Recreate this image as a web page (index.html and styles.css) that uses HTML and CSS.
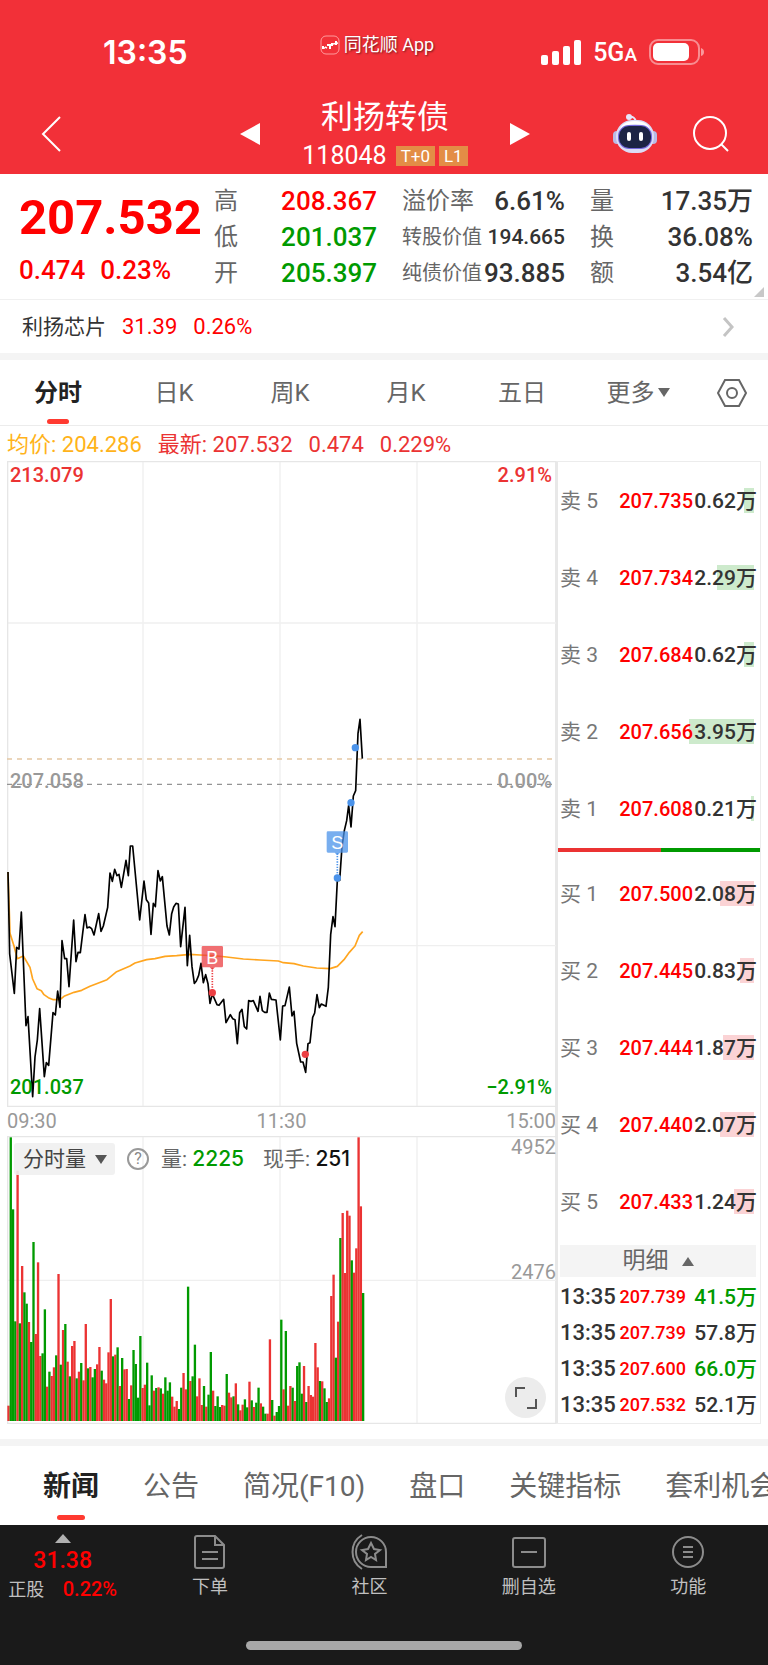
FILE: index.html
```
<!DOCTYPE html>
<html lang="zh-CN">
  <head>
    <meta charset="UTF-8">
    <meta name="viewport" content="width=device-width, initial-scale=1.0">
    <title>利扬转债 118048</title>
    <link rel="stylesheet" href="styles.css">
  </head>
  <body>
    <header class="header">
      <div class="status-bar">
        <span class="clock">13:35</span>
        <span class="watermark">
          <svg width="20" height="20" viewBox="0 0 20 20" fill="none" stroke="#fff">
            <rect x="1" y="1" width="18" height="18" rx="5" stroke="#ff9a9c"/>
            <path d="M2 13h3M5 12l2 1M13 9l5-1" stroke-width="1.500"/>
            <path d="M3 11v3M8 9v2M10 9v5M12 8v3M16 6v4" stroke-width="2"/>
          </svg>
          同花顺 App
        </span>
        <span class="signals">
          <svg width="40" height="25" viewBox="0 0 40 25" fill="#fff">
            <rect x="0" y="15" width="7" height="10" rx="2"/>
            <rect x="11" y="11" width="7" height="14" rx="2"/>
            <rect x="22" y="6" width="7" height="19" rx="2"/>
            <rect x="33" y="0" width="7" height="25" rx="2"/>
          </svg>
          <span class="network">5G<small>A</small></span>
          <svg width="56" height="26" viewBox="0 0 56 26">
            <rect x="1" y="1" width="49" height="24" rx="8" fill="none" stroke="#fff" stroke-opacity=".45" stroke-width="2"/>
            <rect x="4" y="4" width="36" height="18" rx="5" fill="#fff"/>
            <path d="M52 9q3 1 3 4t-3 4z" fill="#fff" fill-opacity=".5"/>
          </svg>
        </span>
      </div>
      <div class="title-bar">
        <button type="button" class="icon-button back" aria-label="返回">
          <svg width="20" height="36" viewBox="0 0 20 36" fill="none" stroke="#fff" stroke-width="2"><path d="M19 1L2 18l17 17"/></svg>
        </button>
        <div class="title-center">
          <button type="button" class="icon-button" aria-label="上一个">
            <svg width="20" height="22" viewBox="0 0 20 22" fill="#fff"><path d="M20 0v22L0 11z"/></svg>
          </button>
          <div class="title">
            <h1>利扬转债</h1>
            <p>118048 <span class="badge">T+0</span><span class="badge">L1</span></p>
          </div>
          <button type="button" class="icon-button" aria-label="下一个">
            <svg width="20" height="22" viewBox="0 0 20 22" fill="#fff"><path d="M0 0v22l20-11z"/></svg>
          </button>
        </div>
        <div class="title-actions">
          <button type="button" class="icon-button" aria-label="智能助手">
            <svg width="44" height="40" viewBox="0 0 44 40">
              <path d="M16 3q6-1 7 5" fill="none" stroke="#e6e6fb" stroke-width="2"/>
              <circle cx="16" cy="3" r="3" fill="#e6e6fb"/>
              <rect x="0" y="17" width="8" height="13" rx="4" fill="#b9bbe6"/>
              <rect x="36" y="17" width="8" height="13" rx="4" fill="#b9bbe6"/>
              <rect x="3" y="6" width="38" height="33" rx="16" fill="#dcdcf6"/>
              <path d="M6 18Q8 7 22 7t16 11Q32 10 22 10T6 18z" fill="#fff"/>
              <rect x="5" y="11" width="34" height="24" rx="11" fill="#7468dc"/>
              <rect x="6" y="12" width="32" height="22" rx="10" fill="#1d2445"/>
              <rect x="14" y="18" width="4" height="9" rx="2" fill="#fff"/>
              <rect x="26" y="18" width="4" height="9" rx="2" fill="#fff"/>
            </svg>
          </button>
          <button type="button" class="icon-button" aria-label="搜索">
            <svg width="36" height="36" viewBox="0 0 36 36" fill="none" stroke="#fff" stroke-width="2"><circle cx="17" cy="17" r="16"/><path d="M28 28l7 7"/></svg>
          </button>
        </div>
      </div>
    </header>

    <section class="quote">
      <div class="quote-price">
        <strong>207.532</strong>
        <p><span>0.474</span><span>0.23%</span></p>
      </div>
      <dl>
        <div><dt>高</dt><dd class="up">208.367</dd></div>
        <div><dt>低</dt><dd class="down">201.037</dd></div>
        <div><dt>开</dt><dd class="down">205.397</dd></div>
      </dl>
      <dl>
        <div><dt>溢价率</dt><dd>6.61%</dd></div>
        <div><dt class="small">转股价值</dt><dd class="small">194.665</dd></div>
        <div><dt class="small">纯债价值</dt><dd>93.885</dd></div>
      </dl>
      <dl>
        <div><dt>量</dt><dd>17.35万</dd></div>
        <div><dt>换</dt><dd>36.08%</dd></div>
        <div><dt>额</dt><dd>3.54亿</dd></div>
      </dl>
      <i class="quote-corner"></i>
    </section>

    <a class="related" href="#stock">
      <span>利扬芯片</span>
      <span class="up">31.39</span>
      <span class="up">0.26%</span>
      <svg width="12" height="20" viewBox="0 0 12 20" fill="none" stroke="#c4c4c4" stroke-width="3"><path d="M2 1l8 9-8 9"/></svg>
    </a>

    <nav class="period-tabs">
      <button type="button" class="active">分时</button>
      <button type="button">日K</button>
      <button type="button">周K</button>
      <button type="button">月K</button>
      <button type="button">五日</button>
      <button type="button">更多<svg width="12" height="9" viewBox="0 0 12 9" fill="#666"><path d="M0 0h12L6 9z"/></svg></button>
      <button type="button" aria-label="设置">
        <svg width="30" height="28" viewBox="0 0 30 28" fill="none" stroke="#666" stroke-width="2"><path d="M8 1h14l7 13-7 13H8L1 14z"/><circle cx="15" cy="14" r="5"/></svg>
      </button>
    </nav>

    <p class="legend">
      <span class="avg">均价: 204.286</span>
      <span>最新: 207.532</span>
      <span>0.474</span>
      <span>0.229%</span>
    </p>

    <main class="market">
      <div class="charts">
        <div class="price-chart">
          <svg viewBox="21 -717 1647 1938">
            <g class="grid">
              <path d="M429-717v1938M840-717v1938M1251-717v1938"/>
              <path d="M21-231h1647M21 737h1647"/>
            </g>
            <path class="frame" d="M23-715h1645M23-717v1938M21 1219h1647"/>
            <path class="latest-line" d="M21 177h1647"/>
            <path class="base-line" d="M21 253h1647"/>
            <polyline class="avg-line" points="24,516 30,700 42,738 52,776 70,768 90,802 98,837 111,866 124,872 132,884 145,893 160,899 180,899 192,889 222,877 245,871 270,859 321,839 350,815 390,798 405,789 440,779 465,776 495,769 530,767 570,763 600,765 640,767 680,771 730,777 780,780 835,783 850,788 882,791 910,798 950,804 990,806 1012,799 1032,779 1048,757 1065,738 1078,706 1088,695"/>
            <polyline class="price-line" points="24,516 29,762 43,880 50,742 57,747 64,636 78,977 84,950 98,1190 105,1071 112,1020 119,926 133,1130 139,1088 146,1096 159,938 166,945 173,873 180,922 186,722 194,776 200,776 207,860 221,660 228,785 234,757 241,758 248,700 255,644 261,684 268,681 275,686 282,705 296,641 303,694 310,678 323,622 330,519 337,544 344,508 351,527 357,523 364,562 378,481 385,527 391,438 398,438 419,660 432,543 439,599 446,609 453,703 460,610 466,620 474,512 481,543 487,530 501,678 508,705 515,641 521,621 528,610 535,612 542,740 555,622 562,797 569,706 576,800 583,850 589,843 596,826 603,790 610,848 617,824 624,851 630,910 637,882 651,914 657,916 671,898 678,968 691,944 698,956 705,959 712,1031 719,938 726,928 733,980 740,987 746,902 753,904 760,902 774,934 780,889 787,932 794,937 801,937 808,879 814,898 828,900 841,1020 848,918 855,917 868,861 876,948 882,934 890,1030 902,1086 909,1086 917,1117 924,1031 930,1028 938,952 944,939 951,884 958,923 964,912 978,919 985,862 992,704 999,650 1005,680 1012,541 1019,541 1026,440 1033,392 1040,362 1046,316 1053,381 1060,288 1067,272 1074,100 1080,58 1087,176"/>
            <g class="mark buy">
              <path class="stem" d="M637 803v70"/>
              <circle cx="637" cy="878" r="11"/>
              <circle cx="916" cy="1063" r="11"/>
              <path class="flag" d="M609 738h56q4 0 4 4v56q0 4-4 4h-20l-8 8-8-8h-20q-4 0-4-4v-56q0-4 4-4z"/>
              <text x="637" y="791">B</text>
            </g>
            <g class="mark sell">
              <path class="stem" d="M1012 460v70"/>
              <circle cx="1012" cy="534" r="11"/>
              <circle cx="1053" cy="308" r="11"/>
              <circle cx="1066" cy="143" r="11"/>
              <path class="flag" d="M984 394h56q4 0 4 4v56q0 4-4 4h-20l-8 8-8-8h-20q-4 0-4-4v-56q0-4 4-4z"/>
              <text x="1012" y="447">S</text>
            </g>
          </svg>
          <p class="scale top"><span>213.079</span><span>2.91%</span></p>
          <p class="scale middle"><span>207.058</span><span>0.00%</span></p>
          <p class="scale bottom"><span>201.037</span><span>−2.91%</span></p>
        </div>

        <p class="time-axis"><span>09:30</span><span>11:30</span><span>15:00</span></p>

        <div class="volume-chart">
          <svg viewBox="21 48 1647 864">
            <path class="grid" d="M429 48v864M840 48v864M1251 48v864M21 481h1647"/>
            <path class="frame" d="M21 50h1647M23 48v864M21 910h1647"/>
            <g id="volume-bars"></g>
          </svg>
          <div class="volume-info">
            <span class="indicator">
              <select aria-label="指标"><option>分时量</option></select>
              <svg width="12" height="9" viewBox="0 0 12 9" fill="#555"><path d="M0 0h12L6 9z"/></svg>
            </span>
            <button type="button" class="help" aria-label="说明">?</button>
            <span>量: <b class="down">2225</b></span>
            <span>现手: <b>251</b></span>
          </div>
          <span class="volume-max">4952</span>
          <span class="volume-half">2476</span>
          <button type="button" class="expand" aria-label="全屏">
            <svg width="22" height="22" viewBox="0 0 22 22" fill="none" stroke="#555" stroke-width="2"><path d="M1 10V1h9M21 12v9h-9"/></svg>
          </button>
        </div>
      </div>

      <aside class="book">
        <table class="depth asks">
          <tr><th>卖 5</th><td class="up">207.735</td><td class="qty"><i style="width: 10px"></i><span>0.62万</span></td></tr>
          <tr><th>卖 4</th><td class="up">207.734</td><td class="qty"><i style="width: 37px"></i><span>2.29万</span></td></tr>
          <tr><th>卖 3</th><td class="up">207.684</td><td class="qty"><i style="width: 10px"></i><span>0.62万</span></td></tr>
          <tr><th>卖 2</th><td class="up">207.656</td><td class="qty"><i style="width: 65px"></i><span>3.95万</span></td></tr>
          <tr><th>卖 1</th><td class="up">207.608</td><td class="qty"><i style="width: 3px"></i><span>0.21万</span></td></tr>
        </table>
        <div class="ratio"><i style="width: 51%"></i></div>
        <table class="depth bids">
          <tr><th>买 1</th><td class="up">207.500</td><td class="qty"><i style="width: 34px"></i><span>2.08万</span></td></tr>
          <tr><th>买 2</th><td class="up">207.445</td><td class="qty"><i style="width: 14px"></i><span>0.83万</span></td></tr>
          <tr><th>买 3</th><td class="up">207.444</td><td class="qty"><i style="width: 31px"></i><span>1.87万</span></td></tr>
          <tr><th>买 4</th><td class="up">207.440</td><td class="qty"><i style="width: 34px"></i><span>2.07万</span></td></tr>
          <tr><th>买 5</th><td class="up">207.433</td><td class="qty"><i style="width: 20px"></i><span>1.24万</span></td></tr>
        </table>
        <button type="button" class="detail-toggle">明细<svg width="12" height="9" viewBox="0 0 12 9" fill="#666"><path d="M0 9h12L6 0z"/></svg></button>
        <table class="ticks">
          <tr><td>13:35</td><td class="up">207.739</td><td class="down">41.5万</td></tr>
          <tr><td>13:35</td><td class="up">207.739</td><td>57.8万</td></tr>
          <tr><td>13:35</td><td class="up">207.600</td><td class="down">66.0万</td></tr>
          <tr><td>13:35</td><td class="up">207.532</td><td>52.1万</td></tr>
        </table>
      </aside>
    </main>

    <nav class="info-tabs">
      <a href="#news" class="active">新闻</a>
      <a href="#notice">公告</a>
      <a href="#f10">简况(F10)</a>
      <a href="#pankou">盘口</a>
      <a href="#metrics">关键指标</a>
      <a href="#arbitrage">套利机会</a>
    </nav>

    <footer class="footer">
      <nav class="actions">
        <a class="stock" href="#stock">
          <svg width="16" height="9" viewBox="0 0 16 9" fill="#b0b0b0"><path d="M0 9h16L8 0z"/></svg>
          <b>31.38</b>
          <span>正股 <b>0.22%</b></span>
        </a>
        <a href="#order">
          <svg width="36" height="36" viewBox="0 0 36 36"><path d="M5 2h18l9 9v21q0 2-2 2H5q-2 0-2-2V4q0-2 2-2zM23 2v9h9M10 18h16M10 25h16"/></svg>
          下单
        </a>
        <a href="#community">
          <svg width="36" height="36" viewBox="0 0 36 36"><path d="M35 18v15H20A15 15 0 1 1 35 18zM11 1a20 20 0 0 0 0 34"/><path d="M20 9l3 6 6 1-5 4 1 6-5-3-5 3 1-6-5-4 6-1z"/></svg>
          社区
        </a>
        <a href="#remove">
          <svg width="36" height="36" viewBox="0 0 36 36"><rect x="2" y="4" width="32" height="29" rx="2"/><path d="M10 18h16"/></svg>
          删自选
        </a>
        <a href="#functions">
          <svg width="36" height="36" viewBox="0 0 36 36"><circle cx="18" cy="18" r="15"/><path d="M13 13h10M13 18h10M13 23h10"/></svg>
          功能
        </a>
      </nav>
      <div class="home-indicator"></div>
    </footer>

    <script>
      // one entry per minute: r = up, g = down, number = top of the bar in viewBox units
      const volumes = `r857 g52 g268 g604 r152 g610 r438 g517 g551 r606 g666 g366 r642 r427 r708 g700
        g568 r800 g755 r768 r742 g706 r462 g734 r630 g612 r725 g769 r678 r663 g775 r755
        g729 r781 r612 g745 r741 g772 g747 r733 r681 g752 r779 r790 r697 r537 g709 r704
        g682 r798 g714 r748 r747 g837 r796 g690 g732 g833 g648 r804 r794 g728 g856 g766
        r812 g804 r802 g805 r821 g772 g812 g787 r830 r860 r843 g867 g803 r759 r808 g500
        r783 g769 g674 r829 r775 r855 g798 r860 g824 g696 r812 g858 g829 g861 r855 r857
        g762 r818 r832 g829 r790 g853 r871 r854 g838 g862 r785 g841 r861 g848 g803 r850
        g860 g881 r881 r658 g840 r887 g876 g858 g599 r808 g633 r857 r798 g803 r843 g738
        g727 g821 r738 g846 r798 r825 r830 r669 r742 g783 r784 g805 g846 r835 r528 r464
        g713 r605 g354 r279 r459 r272 r287 g421 r458 r385 r52 r259 g519`.split(/\s+/);

      const baseline = 903;
      const step = 6.82;
      document.getElementById('volume-bars').innerHTML = volumes.map((item, index) => {
        const top = Number(item.slice(1));
        const name = item[0] === 'r' ? 'bar-up' : 'bar-down';
        return `<rect class="${name}" x="${22 + index * step}" y="${top}" width="7" height="${baseline - top}"/>`;
      }).join('');
    </script>
  </body>
</html>
```
FILE: styles.css
```
* {
  box-sizing: border-box;
}
body {
  font-family: Roboto, 'Noto Sans CJK SC', sans-serif;
  background-color: #fff;
  color: #333;
  margin: 0;
  overflow-x: hidden;
}
h1, p, dl, dd {
  margin: 0;
}
a {
  color: inherit;
  text-decoration: none;
}
button, select {
  font: inherit;
  color: inherit;
  background: none;
  border: none;
  padding: 0;
  cursor: pointer;
}
svg {
  display: block;
  flex: none;
}
.up {
  color: #ff0000;
}
.down {
  color: #009a00;
}

/* header */
.header {
  background-color: #f23038;
  color: #fff;
}
.status-bar {
  display: grid;
  grid-template-columns: 1fr auto 1fr;
  align-items: center;
  height: 94px;
  padding: 10px 63px 0 49px;
}
.clock {
  font-family: Inter, sans-serif;
  font-size: 32px;
  font-weight: 600;
  padding-left: 54px;
}
.watermark {
  display: flex;
  align-items: center;
  gap: 4px;
  font-size: 18px;
  line-height: 20px;
  padding-bottom: 14px;
  text-shadow: 1px 1px 2px rgba(0, 0, 0, 0.5);
}
.signals {
  display: flex;
  align-items: center;
  justify-content: flex-end;
  gap: 12px;
}
.network {
  font-size: 25px;
  font-weight: 500;
}
.network small {
  font-size: 19px;
}
.title-bar {
  display: grid;
  grid-template-columns: 1fr auto 1fr;
  align-items: center;
  height: 80px;
  padding: 0 39px 0 41px;
}
.icon-button {
  display: block;
}
.back {
  justify-self: start;
}
.title-center {
  display: flex;
  align-items: center;
  gap: 42px;
}
.title {
  text-align: center;
  padding-top: 2px;
}
.title h1 {
  font-size: 32px;
  font-weight: 400;
  line-height: 42px;
}
.title p {
  display: flex;
  align-items: center;
  gap: 4px;
  font-size: 25px;
  line-height: 36px;
}
.badge {
  background-color: #e38d46;
  font-size: 17px;
  line-height: 20px;
  padding: 0 5px;
}
.badge:first-of-type {
  margin-left: 5px;
}
.title-actions {
  display: flex;
  align-items: center;
  justify-content: flex-end;
  gap: 36px;
}

/* quote */
.quote {
  position: relative;
  display: grid;
  grid-template-columns: minmax(0, 170fr) repeat(3, minmax(0, 163fr));
  column-gap: 25px;
  height: 126px;
  padding: 9px 15px 0 19px;
  border-bottom: 1px solid #f0f0f0;
}
.quote-price {
  color: #ff0000;
  font-weight: 500;
  white-space: nowrap;
}
.quote-price strong {
  display: block;
  font-size: 49px;
  font-weight: 700;
  line-height: 70px;
}
.quote-price p {
  display: flex;
  gap: 15px;
  font-size: 26px;
  line-height: 34px;
}
.quote dl div {
  display: flex;
  justify-content: space-between;
  align-items: center;
  height: 36px;
  line-height: 36px;
  white-space: nowrap;
}
.quote dt {
  color: #666;
  font-size: 24px;
}
.quote dd {
  font-size: 26px;
  font-weight: 500;
}
.quote dt.small {
  font-size: 20px;
}
.quote dd.small {
  font-size: 21px;
}
.quote-corner {
  position: absolute;
  right: 4px;
  bottom: 2px;
  border-left: 10px solid transparent;
  border-bottom: 10px solid #c8c8c8;
}
.related {
  display: flex;
  align-items: center;
  gap: 16px;
  height: 53px;
  padding: 0 34px 0 22px;
  font-size: 22px;
  line-height: 24px;
}
.related span:first-child {
  font-size: 21px;
}
.related svg {
  margin-left: auto;
}

/* period tabs */
.period-tabs {
  display: grid;
  grid-template-columns: repeat(6, 116fr) 72fr;
  height: 73px;
  border-top: 7px solid #f4f4f4;
  border-bottom: 1px solid #ececec;
  font-size: 24px;
  line-height: 30px;
  color: #666;
}
.period-tabs button {
  position: relative;
  display: flex;
  align-items: center;
  justify-content: center;
  gap: 3px;
}
.period-tabs .active,
.info-tabs .active {
  color: #222;
  font-weight: 700;
}
.period-tabs .active::after,
.info-tabs .active::after {
  content: '';
  position: absolute;
  bottom: 1px;
  left: 50%;
  width: 22px;
  height: 5px;
  margin-left: -11px;
  border-radius: 3px;
  background-color: #ff3a30;
}
.legend {
  display: flex;
  gap: 16px;
  height: 35px;
  padding-left: 7px;
  font-size: 22px;
  line-height: 37px;
  color: #eb3333;
  white-space: nowrap;
}
.legend .avg {
  color: #ffb31a;
}

/* charts */
.market {
  display: grid;
  grid-template-columns: minmax(0, 1fr) 205px;
  padding: 0 7px 15px;
}
.price-chart, .volume-chart {
  position: relative;
}
.price-chart svg:first-child, .volume-chart > svg {
  width: 100%;
}
.grid, .frame {
  fill: none;
  stroke: #efefef;
  stroke-width: 4;
}
.frame {
  stroke: #e6e6e6;
}
.latest-line, .base-line {
  fill: none;
  stroke: #e5c8a4;
  stroke-width: 4;
  stroke-dasharray: 15 15;
}
.base-line {
  stroke: #949494;
}
.avg-line, .price-line {
  fill: none;
  stroke: #ffa51f;
  stroke-width: 5;
  stroke-linejoin: round;
}
.price-line {
  stroke: #000;
}
.mark .stem {
  stroke-width: 5;
  stroke-dasharray: 4 4;
}
.mark .flag {
  fill-opacity: 0.75;
}
.mark text {
  fill: #fff;
  font-family: 'Liberation Sans', sans-serif;
  font-size: 54px;
  text-anchor: middle;
}
.buy {
  fill: #eb3f43;
}
.buy .stem {
  stroke: #eb3f43;
}
.sell {
  fill: #4b93ea;
}
.sell .stem {
  stroke: #4b93ea;
}
.scale {
  position: absolute;
  left: 3px;
  right: 4px;
  display: flex;
  justify-content: space-between;
  font-size: 20px;
  font-weight: 500;
  line-height: 24px;
}
.scale.top {
  top: 2px;
  color: #eb3333;
}
.scale.middle {
  top: 50%;
  margin-top: -15px;
  color: #999;
}
.scale.bottom {
  bottom: 8px;
  color: #009a00;
}
.time-axis {
  display: flex;
  justify-content: space-between;
  color: #999;
  font-size: 20px;
  line-height: 29px;
}
.bar-up {
  fill: #eb3333;
}
.bar-down {
  fill: #009a00;
}
.volume-info {
  position: absolute;
  top: 7px;
  left: 7px;
  display: flex;
  align-items: center;
  color: #666;
  font-size: 21px;
  line-height: 32px;
  white-space: nowrap;
}
.volume-info > span + span {
  margin-left: 19px;
}
.volume-info b {
  font-family: Inter, sans-serif;
  font-size: 21px;
  font-weight: 500;
}
.volume-info b:not(.down) {
  color: #111;
}
.indicator {
  position: relative;
  background-color: rgba(240, 240, 240, 0.9);
  border-radius: 3px;
}
.indicator select {
  appearance: none;
  display: block;
  width: 101px;
  height: 32px;
  padding-left: 9px;
  color: #444;
}
.indicator svg {
  position: absolute;
  right: 8px;
  top: 12px;
  pointer-events: none;
}
.help {
  width: 22px;
  height: 22px;
  margin: 0 12px;
  border: 2px solid #999;
  border-radius: 50%;
  color: #888;
  font-size: 16px;
  line-height: 18px;
}
.volume-max, .volume-half {
  position: absolute;
  right: 0;
  color: #999;
  font-size: 20px;
  line-height: 22px;
}
.volume-max {
  top: 0;
}
.volume-half {
  bottom: 50%;
  margin-bottom: -3px;
}
.expand {
  position: absolute;
  right: 10px;
  bottom: 6px;
  display: flex;
  align-items: center;
  justify-content: center;
  width: 41px;
  height: 41px;
  border-radius: 50%;
  background-color: #ececec;
}

/* order book */
.book {
  border: 1px solid #ececec;
  border-left: 3px solid #e8e8e8;
  margin-left: -1px;
}
.book table {
  width: 100%;
  border-collapse: collapse;
  line-height: 24px;
}
.book th, .book td {
  padding: 0;
  text-align: left;
  font-weight: 500;
  white-space: nowrap;
}
.depth tr {
  height: 77px;
}
.book th {
  width: 56px;
  padding-left: 2px;
  color: #777;
  font-size: 21px;
  font-weight: 400;
}
.depth td {
  position: relative;
  font-size: 20px;
  text-align: right;
}
.depth .up {
  z-index: 1;
}
.depth .qty {
  width: 67px;
  padding-right: 3px;
  font-size: 21px;
}
.depth i {
  position: absolute;
  right: 6px;
  top: 50%;
  height: 25px;
  margin-top: -13px;
  background-color: #cdeacc;
}
.bids i {
  background-color: #fbd3d5;
}
.qty span {
  position: relative;
}
.ratio {
  height: 4px;
  margin: 1px 0 3px;
  background-color: #009a00;
}
.ratio i {
  display: block;
  height: 4px;
  background-color: #eb3333;
}
.detail-toggle {
  display: flex;
  align-items: center;
  justify-content: center;
  gap: 13px;
  width: calc(100% - 6px);
  height: 32px;
  margin: 5px 4px 2px 2px;
  background-color: #f4f4f4;
  color: #666;
  font-size: 23px;
  line-height: 32px;
}
.ticks tr {
  height: 36px;
}
.ticks td {
  font-size: 21px;
}
.book .ticks td:first-child {
  padding-left: 2px;
  font-size: 22px;
}
.ticks td:nth-child(2) {
  font-size: 18px;
}
.book .ticks td:last-child {
  padding-right: 3px;
  text-align: right;
}

/* info tabs */
.info-tabs {
  display: flex;
  gap: 44px;
  height: 86px;
  padding-left: 43px;
  border-top: 7px solid #f4f4f4;
  color: #666;
  font-size: 28px;
  line-height: 82px;
  white-space: nowrap;
  overflow: hidden;
}
.info-tabs a {
  position: relative;
  height: 79px;
}
.info-tabs .active::after {
  bottom: 5px;
  width: 28px;
  margin-left: -14px;
}

/* footer */
.footer {
  height: 140px;
  padding-top: 9px;
  background-color: #1a1a1a;
  color: #c0c0c0;
}
.actions {
  display: grid;
  grid-template-columns: 130fr repeat(4, 159fr);
  height: 107px;
  font-size: 18px;
}
.actions a {
  display: flex;
  flex-direction: column;
  align-items: center;
  gap: 2px;
}
.actions svg {
  fill: none;
  stroke: #8c8c8c;
  stroke-width: 2;
}
.actions .stock {
  gap: 0;
  padding-right: 5px;
}
.actions .stock svg {
  fill: #b0b0b0;
  stroke: none;
}
.stock b {
  color: #ff0000;
  font-weight: 500;
  font-size: 23px;
  line-height: 35px;
}
.stock span {
  line-height: 22px;
}
.stock span b {
  font-size: 20px;
  line-height: 22px;
  margin-left: 14px;
}
.home-indicator {
  width: 36%;
  height: 9px;
  margin: 0 auto;
  border-radius: 5px;
  background-color: #a8a8a8;
}
```
